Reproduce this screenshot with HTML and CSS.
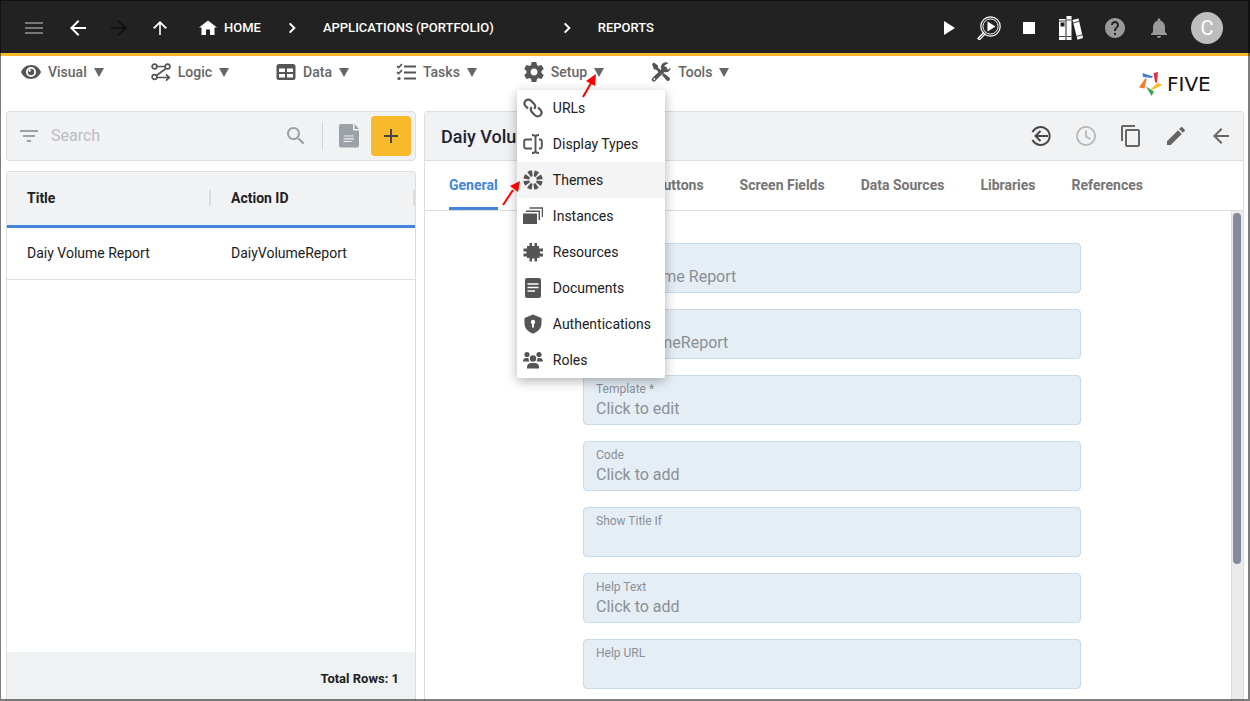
FILE: index.html
```html
<!DOCTYPE html>
<html lang="en">
<head>
    <meta charset="UTF-8">
    <meta name="viewport" content="width=device-width, initial-scale=1.0">
    <title>Five - Reports</title>
    <link rel="stylesheet" href="styles.css">
</head>
<body>

<header class="topbar">
    <button type="button" class="icon-btn menu-btn" aria-label="Menu">
        <svg viewBox="0 0 24 24"><path d="M3 18h18v-2H3v2zm0-5h18v-2H3v2zm0-7v2h18V6H3z"/></svg>
    </button>
    <div class="history">
        <button type="button" class="icon-btn" aria-label="Back">
            <svg viewBox="0 0 24 24"><path d="M20 11H7.800l5.600-5.600L12 4l-8 8 8 8 1.400-1.400L7.800 13H20z"/></svg>
        </button>
        <button type="button" class="icon-btn off" aria-label="Forward" disabled>
            <svg viewBox="0 0 24 24"><path d="M4 11h12.200l-5.600-5.600L12 4l8 8-8 8-1.400-1.400 5.600-5.600H4z"/></svg>
        </button>
        <button type="button" class="icon-btn" aria-label="Up">
            <svg viewBox="0 0 24 24"><path d="M11.200 19V8.200l-4.800 4.900L5 11.800l7-6.800 7 6.800-1.400 1.300-4.800-4.900V19z"/></svg>
        </button>
    </div>
    <nav class="crumbs">
        <a href="#" class="crumb home">
            <svg viewBox="0 0 24 24"><path d="M10 19v-5.500h4V19h4.500v-7.500H21L12 4.500 3 11.500h2.500V19z"/></svg>HOME
        </a>
        <svg class="chevron" viewBox="0 0 24 24"><path d="M9.700 7.400L14.300 12l-4.600 4.600" fill="none" stroke="currentColor" stroke-width="2"/></svg>
        <a href="#" class="crumb app">APPLICATIONS (PORTFOLIO)</a>
        <svg class="chevron" viewBox="0 0 24 24"><path d="M9.700 7.400L14.300 12l-4.600 4.600" fill="none" stroke="currentColor" stroke-width="2"/></svg>
        <a href="#" class="crumb">REPORTS</a>
    </nav>
    <div class="run">
        <button type="button" class="icon-btn" aria-label="Run">
            <svg viewBox="0 0 24 24"><path d="M7 5l11 7-11 7z"/></svg>
        </button>
        <button type="button" class="icon-btn" aria-label="Inspect">
            <svg viewBox="0 0 24 24" fill="none" stroke="currentColor"><circle cx="13.500" cy="10.500" r="9.700" stroke-width="1.200"/><circle cx="13.500" cy="10.500" r="7.600" stroke-width="1"/><path d="M7 16l-6 6.500 1.500 1.200 6-6.200" stroke-width="1.300"/><path d="M10.500 5.500l8 5-8 5z" fill="currentColor" stroke="none"/></svg>
        </button>
        <button type="button" class="icon-btn" aria-label="Stop">
            <svg viewBox="0 0 24 24"><path d="M6 6h12v12H6z"/></svg>
        </button>
    </div>
    <div class="user">
        <button type="button" class="icon-btn" aria-label="Library">
            <svg viewBox="0 0 24 24"><path d="M0 3h6.500v21H0zM7.500 0h5v24h-5zM13.500 4l6-1.500L24 22l-5.500 1.800z"/><path d="M1.500 6.500h4v4h-4z" fill="#222"/><path d="M0 5h6.500M0 20.500h6.500M7.500 4h5M7.500 20.500h5M14 7l6-1.700M17.500 20.500l6-1.800" stroke="#444" fill="none"/></svg>
        </button>
        <button type="button" class="icon-btn dim" aria-label="Help">
            <svg viewBox="0 0 24 24"><path d="M12 2C6.480 2 2 6.480 2 12s4.480 10 10 10 10-4.480 10-10S17.520 2 12 2zm1 17h-2v-2h2v2zm2.070-7.750l-.9.920C13.450 12.900 13 13.500 13 15h-2v-.5c0-1.100.45-2.100 1.170-2.830l1.240-1.260c.37-.36.59-.86.59-1.410 0-1.100-.9-2-2-2s-2 .9-2 2H8c0-2.210 1.790-4 4-4s4 1.790 4 4c0 .88-.36 1.680-.93 2.250z"/></svg>
        </button>
        <button type="button" class="icon-btn dim" aria-label="Notifications">
            <svg viewBox="0 0 24 24"><path d="M12 22c1.100 0 2-.9 2-2h-4c0 1.100.9 2 2 2zm6-6v-5c0-3.070-1.640-5.640-4.500-6.320V4c0-.83-.67-1.500-1.500-1.500s-1.500.67-1.500 1.500v.68C7.630 5.360 6 7.920 6 11v5l-2 2v1h16v-1l-2-2z"/></svg>
        </button>
        <button type="button" class="avatar">C</button>
    </div>
</header>

<div class="mainmenu">
    <nav class="menus">
        <div class="menu">
            <button type="button" class="menu-title">
                <svg viewBox="0 0 20 20"><path fill-rule="evenodd" d="M10 3C5.500 3 1.600 5.800 0 10c1.600 4.200 5.500 7 10 7s8.400-2.800 10-7c-1.600-4.200-5.500-7-10-7zm0 12a5 5 0 1 1 0-10 5 5 0 0 1 0 10z"/><circle cx="10" cy="10" r="3.200"/><circle cx="8.800" cy="8.500" r="1.200" fill="#fff"/></svg>
                Visual<span class="caret"></span>
            </button>
        </div>
        <div class="menu">
            <button type="button" class="menu-title">
                <svg viewBox="0 0 20 20" fill="none" stroke="currentColor" stroke-width="1.700"><circle cx="3.500" cy="4.500" r="2.400"/><circle cx="16.500" cy="4.500" r="2.400"/><circle cx="3.500" cy="15" r="2.400"/><path d="M6 4.500h8M15 6.500L5.500 13.500M6 15.500h12M15 12.300l3.300 3.200-3.300 3.200"/></svg>
                Logic<span class="caret"></span>
            </button>
        </div>
        <div class="menu">
            <button type="button" class="menu-title">
                <svg viewBox="0 0 20 20"><path fill-rule="evenodd" d="M3 2h14a2.500 2.500 0 0 1 2.500 2.500v11A2.500 2.500 0 0 1 17 18H3A2.500 2.500 0 0 1 .500 15.500v-11A2.500 2.500 0 0 1 3 2zM3 6.500V10h6V6.500zM11 6.500V10h6V6.500zM3 12v3.500h6V12zM11 12v3.500h6V12z"/></svg>
                Data<span class="caret"></span>
            </button>
        </div>
        <div class="menu">
            <button type="button" class="menu-title">
                <svg viewBox="0 0 20 20" fill="none" stroke="currentColor" stroke-width="2"><path d="M8 4.500h12M8 10.500h12M8 16.500h12"/><path d="M1 4l1.600 1.600L6 2.200M1 10l1.600 1.600L6 8.200" stroke-width="1.700"/><circle cx="3" cy="16.500" r="1.600" fill="currentColor" stroke="none"/></svg>
                Tasks<span class="caret"></span>
            </button>
        </div>
        <div class="menu">
            <button type="button" class="menu-title" aria-expanded="true">
                <svg viewBox="2 2 20 20"><path d="M19.430 12.980c.04-.32.07-.64.07-.98s-.03-.66-.07-.98l2.110-1.650c.19-.15.24-.42.12-.64l-2-3.460c-.12-.22-.39-.3-.61-.22l-2.490 1c-.52-.4-1.080-.73-1.690-.98l-.38-2.650C14.460 2.180 14.250 2 14 2h-4c-.25 0-.46.18-.49.42l-.38 2.650c-.61.25-1.170.59-1.690.98l-2.490-1c-.23-.09-.49 0-.61.22l-2 3.460c-.13.22-.07.49.12.64l2.110 1.650c-.04.32-.07.65-.07.98s.03.66.07.98l-2.110 1.650c-.19.15-.24.42-.12.64l2 3.460c.12.22.39.3.61.22l2.490-1c.52.4 1.080.73 1.690.98l.38 2.650c.03.24.24.42.49.42h4c.25 0 .46-.18.49-.42l.38-2.650c.61-.25 1.170-.59 1.690-.98l2.490 1c.23.09.49 0 .61-.22l2-3.460c.12-.22.07-.49-.12-.64l-2.110-1.650zM12 15.500c-1.930 0-3.500-1.570-3.500-3.500s1.570-3.500 3.500-3.500 3.500 1.570 3.500 3.500-1.570 3.500-3.500 3.500z"/></svg>
                Setup<span class="caret"></span>
            </button>
            <ul class="dropdown">
                <li><button type="button">
                    <svg viewBox="0 0 20 20" fill="none" stroke="currentColor" stroke-width="2.200"><path d="M5 10.500L2.500 8a4 4 0 0 1 0-5.200 4 4 0 0 1 5.500 0l3 3a3.800 3.800 0 0 1 .3 5"/><path d="M15 9.500l2.500 2.500a4 4 0 0 1 0 5.200 4 4 0 0 1-5.500 0l-3-3a3.800 3.800 0 0 1-.3-5"/></svg>URLs
                </button></li>
                <li><button type="button">
                    <svg viewBox="0 0 20 20" fill="none" stroke="currentColor" stroke-width="1.900"><path d="M9 5.500H3A1.800 1.800 0 0 0 1.200 7.300v5.400A1.800 1.800 0 0 0 3 14.500h6M16 5.500h1a1.800 1.800 0 0 1 1.800 1.800v5.400a1.800 1.800 0 0 1-1.800 1.800h-1M12.500 2v16M9 1c2 0 3.500.5 3.500 2 0-1.500 1.500-2 3.500-2M9 19c2 0 3.500-.5 3.500-2 0 1.500 1.500 2 3.500 2"/></svg>Display Types
                </button></li>
                <li class="active"><button type="button">
                    <svg viewBox="0 0 20 20"><circle cx="10" cy="10" r="6.700" fill="none" stroke="currentColor" stroke-width="6" stroke-dasharray="3.462 1.800" stroke-dashoffset="-.9"/></svg>Themes
                </button></li>
                <li><button type="button">
                    <svg viewBox="0 0 20 20"><path d="M0 7.500h14V18H0z"/><path d="M3 5.200h13.300V14M6.500 2h13V11" fill="none" stroke="currentColor" stroke-width="1.500"/></svg>Instances
                </button></li>
                <li><button type="button">
                    <svg viewBox="0 0 20 20"><path d="M4 4h2.500V1H9v3h2.500V1H14v3h2v2.500h4v3h-3v2h3v3h-3.500V16H14v3.500h-2.500V16.500H9v3H6.500V16H4v-1.500H.500v-3h3v-2H.500v-3H4z"/></svg>Resources
                </button></li>
                <li><button type="button">
                    <svg viewBox="0 0 20 20"><path d="M4 0h12a2 2 0 0 1 2 2v16a2 2 0 0 1-2 2H4a2 2 0 0 1-2-2V2a2 2 0 0 1 2-2z"/><path d="M4.500 6h11M4.500 9.500h11M4.500 13h7.500" stroke="#fff" stroke-width="1.400"/></svg>Documents
                </button></li>
                <li><button type="button">
                    <svg viewBox="0 0 20 20"><path d="M10 .5L1.500 4v5.500c0 5 4 8.700 8.500 10 4.500-1.300 8.500-5 8.500-10V4z"/><circle cx="10" cy="8" r="2.200" fill="#fff"/><path d="M9 8h2v5.500H9z" fill="#fff"/></svg>Authentications
                </button></li>
                <li><button type="button">
                    <svg viewBox="0 0 20 20"><circle cx="4" cy="4.500" r="2.600"/><circle cx="16" cy="4.500" r="2.600"/><circle cx="10" cy="8.500" r="3.200"/><path d="M0 11.500c0-2.500 1.500-3.500 3-3.500h2.500c0 2 .5 3 1.200 3.500zM20 11.500c0-2.500-1.500-3.500-3-3.500h-2.500c0 2-.5 3-1.200 3.500zM4 18.500v-1.500c0-2.500 2-4 4-4h4c2 0 4 1.500 4 4v1.500z"/></svg>Roles
                </button></li>
            </ul>
            <svg class="pointer to-setup" viewBox="0 0 18 26"><path d="M2 24l8-14" stroke="#f00" stroke-width="2"/><path d="M15 1l-1 12-9-5z" fill="#f00"/></svg>
            <svg class="pointer to-themes" viewBox="0 0 18 26"><path d="M1 25l10-15" stroke="#f00" stroke-width="2"/><path d="M18 1l-2 11-8-6z" fill="#f00"/></svg>
        </div>
        <div class="menu">
            <button type="button" class="menu-title">
                <svg viewBox="0 0 20 20"><path d="M1 2l2-1.500 4 3v2l4 4-2 2-4-4H3zM12.500 11l5.800 4.500a2 2 0 0 1-2.700 3L11 13z"/><path d="M2.800 17.500L14 6.500" stroke="currentColor" stroke-width="4" stroke-linecap="round"/><path d="M17.500 1a5 5 0 1 0 2.300 5l-3 1.500-3-1.500-.3-2.500z"/><circle cx="3.300" cy="17" r=".9" fill="#fff"/></svg>
                Tools<span class="caret"></span>
            </button>
        </div>
    </nav>
    <div class="brand">
        <svg viewBox="0 0 24 24"><path d="M3.500 1L14 4.500 13 6 4 5z" fill="#3f80d8"/><path d="M14.500 1L19 0l-1 11-2-1z" fill="#e53238"/><path d="M23.500 13L13 18l-1-1 6.500-6z" fill="#f8b92b"/><path d="M7 14.500l8 5L12.500 24z" fill="#3da757"/><path d="M0 15.500L6.500 6l1 1.500-2 9z" fill="#f37c2c"/></svg>
        <span>FIVE</span>
    </div>
</div>

<main class="content">
    <section class="list">
        <div class="search">
            <svg class="filter" viewBox="0 0 24 24"><path d="M10 18h4v-2h-4v2zM3 6v2h18V6H3zm3 7h12v-2H6v2z"/></svg>
            <input type="text" class="search-input" placeholder="Search" aria-label="Search">
            <button type="button" class="icon-btn" aria-label="Find">
                <svg viewBox="0 0 24 24"><path d="M15.500 14h-.79l-.28-.27C15.410 12.590 16 11.110 16 9.500 16 5.910 13.090 3 9.500 3S3 5.910 3 9.500 5.910 16 9.500 16c1.610 0 3.090-.59 4.230-1.570l.27.28v.79l5 4.990L20.490 19l-4.990-5zm-6 0C7.010 14 5 11.990 5 9.500S7.010 5 9.500 5 14 7.010 14 9.500 11.990 14 9.500 14z"/></svg>
            </button>
            <span class="divider"></span>
            <button type="button" class="icon-btn" aria-label="Export">
                <svg viewBox="0 0 24 24"><path d="M4 0h12v5.500a1 1 0 0 0 1 1h5V21.500a2 2 0 0 1-2 2H4a2 2 0 0 1-2-2V2a2 2 0 0 1 2-2zM17.500 0L22 5h-4.500z"/><path d="M6.500 12h10.500M6.500 14.800h10.500M6.500 17.500h8" stroke="#f1f2f4" stroke-width="1.200"/></svg>
            </button>
            <button type="button" class="add-btn" aria-label="Add">
                <svg viewBox="0 0 24 24"><path d="M19 13h-6v6h-2v-6H5v-2h6V5h2v6h6v2z"/></svg>
            </button>
        </div>
        <div class="grid">
            <table class="records">
                <thead>
                    <tr><th><span>Title</span></th><th><span>Action ID</span></th></tr>
                </thead>
                <tbody>
                    <tr><td>Daiy Volume Report</td><td>DaiyVolumeReport</td></tr>
                </tbody>
            </table>
            <div class="total">Total Rows: 1</div>
        </div>
    </section>

    <section class="detail">
        <div class="detail-head">
            <h1>Daiy Volume Report</h1>
            <div class="actions">
                <button type="button" class="icon-btn strong" aria-label="Revert">
                    <svg viewBox="0 0 24 24" fill="none" stroke="currentColor" stroke-width="2"><path d="M3.500 8.200a9 9 0 1 1 0 7.600M19 12H7M11.500 7L6.500 12l5 5"/></svg>
                </button>
                <button type="button" class="icon-btn faded" aria-label="History" disabled>
                    <svg viewBox="0 0 24 24" fill="none" stroke="currentColor" stroke-width="1.800"><circle cx="12" cy="12" r="9.100"/><path d="M12 6.500v6l4.500 2.700"/></svg>
                </button>
                <button type="button" class="icon-btn" aria-label="Copy">
                    <svg viewBox="0 0 24 24"><path d="M16 1H4c-1.100 0-2 .9-2 2v14h2V3h12V1zm3 4H8c-1.100 0-2 .9-2 2v14c0 1.100.9 2 2 2h11c1.100 0 2-.9 2-2V7c0-1.100-.9-2-2-2zm0 16H8V7h11v14z"/></svg>
                </button>
                <button type="button" class="icon-btn" aria-label="Edit">
                    <svg viewBox="0 0 24 24"><path d="M3 17.250V21h3.750L17.810 9.940l-3.750-3.750L3 17.250zM20.710 7.040c.39-.39.39-1.020 0-1.410l-2.340-2.340c-.39-.39-1.020-.39-1.410 0l-1.830 1.830 3.750 3.750 1.830-1.830z"/></svg>
                </button>
                <button type="button" class="icon-btn" aria-label="Close">
                    <svg viewBox="0 0 24 24"><path d="M20 11H7.800l5.600-5.600L12 4l-8 8 8 8 1.400-1.400L7.800 13H20z"/></svg>
                </button>
            </div>
        </div>
        <div class="tabs">
            <button type="button" class="tab selected">General</button>
            <button type="button" class="tab wide">Buttons</button>
            <button type="button" class="tab">Screen Fields</button>
            <button type="button" class="tab">Data Sources</button>
            <button type="button" class="tab">Libraries</button>
            <button type="button" class="tab">References</button>
        </div>
        <div class="detail-body">
            <form class="fields">
                <div class="field">
                    <label for="title">Title *</label>
                    <input type="text" id="title" value="Daiy Volume Report" readonly>
                </div>
                <div class="field">
                    <label for="actionId">Action ID *</label>
                    <input type="text" id="actionId" value="DaiyVolumeReport" readonly>
                </div>
                <div class="field">
                    <label for="template">Template *</label>
                    <input type="text" id="template" value="Click to edit" readonly>
                </div>
                <div class="field">
                    <label for="code">Code</label>
                    <input type="text" id="code" value="Click to add" readonly>
                </div>
                <div class="field">
                    <label for="showTitleIf">Show Title If</label>
                    <input type="text" id="showTitleIf" readonly>
                </div>
                <div class="field">
                    <label for="helpText">Help Text</label>
                    <input type="text" id="helpText" value="Click to add" readonly>
                </div>
                <div class="field">
                    <label for="helpUrl">Help URL</label>
                    <input type="text" id="helpUrl" readonly>
                </div>
            </form>
            <div class="scroll"><div class="thumb"></div></div>
        </div>
    </section>
</main>

</body>
</html>
```

FILE: styles.css
```css
* {
    box-sizing: border-box;
}
body {
    margin: 0;
    height: 100vh;
    display: flex;
    flex-direction: column;
    overflow: hidden;
    font-family: Roboto, "Liberation Sans", sans-serif;
    font-size: 14px;
    color: #212121;
    background-color: #fff;
}
/* window frame */
body::after {
    content: "";
    position: fixed;
    inset: 0;
    border: 1px solid rgba(0, 0, 0, 0.5);
    border-right-width: 2px;
    border-bottom-width: 2px;
    pointer-events: none;
    z-index: 20;
}
button {
    font: inherit;
    color: inherit;
    background: none;
    border: none;
    padding: 0;
    cursor: pointer;
}
svg {
    display: block;
    flex: none;
    fill: currentColor;
}
svg[fill="none"] {
    fill: none;
}
.icon-btn, .icon-btn svg {
    width: 24px;
    height: 24px;
}

/* top bar */
.topbar {
    display: flex;
    align-items: center;
    height: 56px;
    flex: none;
    padding: 2px 27px 0 22px;
    background-color: #222;
    border-bottom: 3px solid #f8b92b;
    color: #fff;
}
.menu-btn {
    color: #777;
    margin-right: 20px;
}
.history {
    display: flex;
    gap: 17px;
    margin-right: 24px;
}
.off {
    color: #111;
}
.crumbs {
    display: flex;
    align-items: center;
    gap: 19px;
    flex: 1;
}
.crumb {
    color: #fff;
    text-decoration: none;
    font-size: 13px;
    font-weight: 500;
    line-height: 16px;
    white-space: nowrap;
}
.home {
    display: flex;
    align-items: center;
    gap: 4px;
}
.home svg, .chevron {
    width: 24px;
    height: 24px;
}
.app {
    margin-right: 42px;
}
.run {
    display: flex;
    gap: 16px;
    margin-right: 18px;
}
.user {
    display: flex;
    align-items: center;
    gap: 20px;
}
.dim {
    color: #999;
}
.avatar {
    width: 32px;
    height: 32px;
    border-radius: 50%;
    background-color: #bdbdbd;
    color: #fff;
    font-size: 20px;
}

/* main menu */
.mainmenu {
    display: flex;
    justify-content: space-between;
    flex: none;
    height: 55px;
    padding: 6px 24px 0 21px;
}
.menus {
    display: flex;
    align-items: flex-start;
    gap: 47px;
}
.menu {
    position: relative;
}
.menu-title {
    display: flex;
    align-items: center;
    gap: 7px;
    height: 20px;
    color: #666;
    font-weight: 500;
}
.menu-title svg {
    width: 20px;
    height: 20px;
    color: #555;
}
.caret {
    border: 5px solid transparent;
    border-top: 9px solid #666;
    border-bottom: 0;
}
.dropdown {
    position: absolute;
    top: 28px;
    left: -7px;
    z-index: 5;
    width: 148px;
    margin: 0;
    padding: 0;
    list-style: none;
    background-color: #fff;
    border-radius: 2px;
    box-shadow: 0 3px 12px rgba(0, 0, 0, 0.3);
}
.dropdown button {
    display: flex;
    align-items: center;
    gap: 10px;
    width: 100%;
    height: 36px;
    padding: 0 6px;
    white-space: nowrap;
}
.dropdown svg {
    width: 20px;
    height: 20px;
    color: #555;
}
.dropdown .active {
    background-color: #f4f4f4;
}
.pointer {
    position: absolute;
    z-index: 6;
    width: 18px;
    height: 26px;
}
.to-setup {
    top: 11px;
    left: 57px;
}
.to-themes {
    top: 118px;
    left: -22px;
}
.brand {
    display: flex;
    align-items: center;
    gap: 4px;
    width: 87px;
    height: 43px;
    font-family: "DejaVu Sans", sans-serif;
    font-size: 20px;
    color: #111;
}
.brand svg {
    width: 24px;
    height: 24px;
}

/* list on the left */
.content {
    display: flex;
    gap: 8px;
    flex: 1;
    min-height: 0;
    padding: 0 6px;
}
.list {
    display: flex;
    flex-direction: column;
    gap: 10px;
    width: 410px;
    flex: none;
}
.search {
    display: flex;
    align-items: center;
    height: 50px;
    padding: 0 4px 0 10px;
    background-color: #f1f2f4;
    border: 1px solid #ddd;
    border-radius: 4px;
    color: #9aa1a7;
}
.filter {
    width: 24px;
    height: 24px;
}
.search-input {
    flex: 1;
    min-width: 0;
    margin-left: 10px;
    padding: 0 0 2px;
    border: none;
    outline: none;
    background: none;
    font: inherit;
    font-size: 16px;
}
.search-input::placeholder {
    color: #bbbdc0;
}
.divider {
    width: 1px;
    height: 28px;
    margin: 0 14px;
    background-color: #d0d3d6;
}
.add-btn {
    display: flex;
    align-items: center;
    justify-content: center;
    width: 40px;
    height: 40px;
    margin-left: 10px;
    border-radius: 4px;
    background-color: #f8b92b;
    color: #444;
}
.add-btn svg {
    width: 24px;
    height: 24px;
}
.grid {
    display: flex;
    flex-direction: column;
    flex: 1;
    border: 1px solid #ddd;
    border-bottom: none;
    border-radius: 4px 4px 0 0;
    overflow: hidden;
}
.records {
    width: 100%;
    table-layout: fixed;
    border-spacing: 0;
}
.records th, .records td {
    padding: 0 0 2px 20px;
    text-align: left;
}
.records th {
    height: 56px;
    background-color: #f1f2f4;
    border-bottom: 3px solid #4285d9;
    font-weight: 700;
}
.records th span {
    display: block;
    border-right: 2px solid #ddd;
}
.records td {
    height: 52px;
    border-bottom: 1px solid #e0e0e0;
}
.total {
    margin-top: auto;
    height: 49px;
    padding: 0 16px;
    line-height: 53px;
    text-align: right;
    background-color: #eef2f3;
    font-size: 13px;
    font-weight: 700;
}

/* record on the right */
.detail {
    display: flex;
    flex-direction: column;
    flex: 1;
    min-width: 0;
    border: 1px solid #ddd;
    border-bottom: none;
    border-radius: 4px 4px 0 0;
}
.detail-head {
    display: flex;
    align-items: center;
    justify-content: space-between;
    height: 49px;
    flex: none;
    padding: 0 10px 0 16px;
    background-color: #f1f2f4;
    border-bottom: 1px solid #ddd;
}
.detail-head h1 {
    margin: 0;
    font-size: 18px;
    font-weight: 500;
    color: #1c2331;
}
.actions {
    display: flex;
    gap: 21px;
    color: #666;
}
.strong {
    color: #484848;
}
.faded {
    color: #b5b5b5;
}
.tabs {
    display: flex;
    gap: 36px;
    height: 50px;
    flex: none;
    padding: 0 24px;
    border-bottom: 1px solid #ddd;
}
.tab {
    border-bottom: 3px solid transparent;
    padding-top: 1px;
    font-weight: 700;
    color: #757575;
    white-space: nowrap;
}
.tab.wide {
    width: 170px;
    text-align: right;
}
.tab.selected {
    color: #4285d9;
    border-bottom-color: #4285d9;
}
.detail-body {
    display: flex;
    flex: 1;
    min-height: 0;
    overflow: hidden;
}
.fields {
    display: flex;
    flex-direction: column;
    gap: 16px;
    width: 506px;
    margin: 0 auto;
    padding: 32px 0 0 8px;
}
.field {
    display: flex;
    flex-direction: column;
    flex: none;
    height: 50px;
    padding: 6px 12px 4px;
    background-color: #e5edf5;
    border: 1px solid #c8dbec;
    border-radius: 4px;
    color: #8c9095;
}
.field label {
    font-size: 12px;
    line-height: 14px;
}
.field input {
    width: 100%;
    height: 26px;
    padding: 0;
    border: none;
    outline: none;
    background: none;
    color: inherit;
    font: inherit;
    font-size: 16px;
}
.scroll {
    width: 12px;
    flex: none;
    padding: 2px 2px 0 1px;
    background-color: #ebebeb;
    border-left: 1px solid #ddd;
}
.thumb {
    height: 72%;
    border-radius: 4px;
    background-color: #828a9b;
}
```
